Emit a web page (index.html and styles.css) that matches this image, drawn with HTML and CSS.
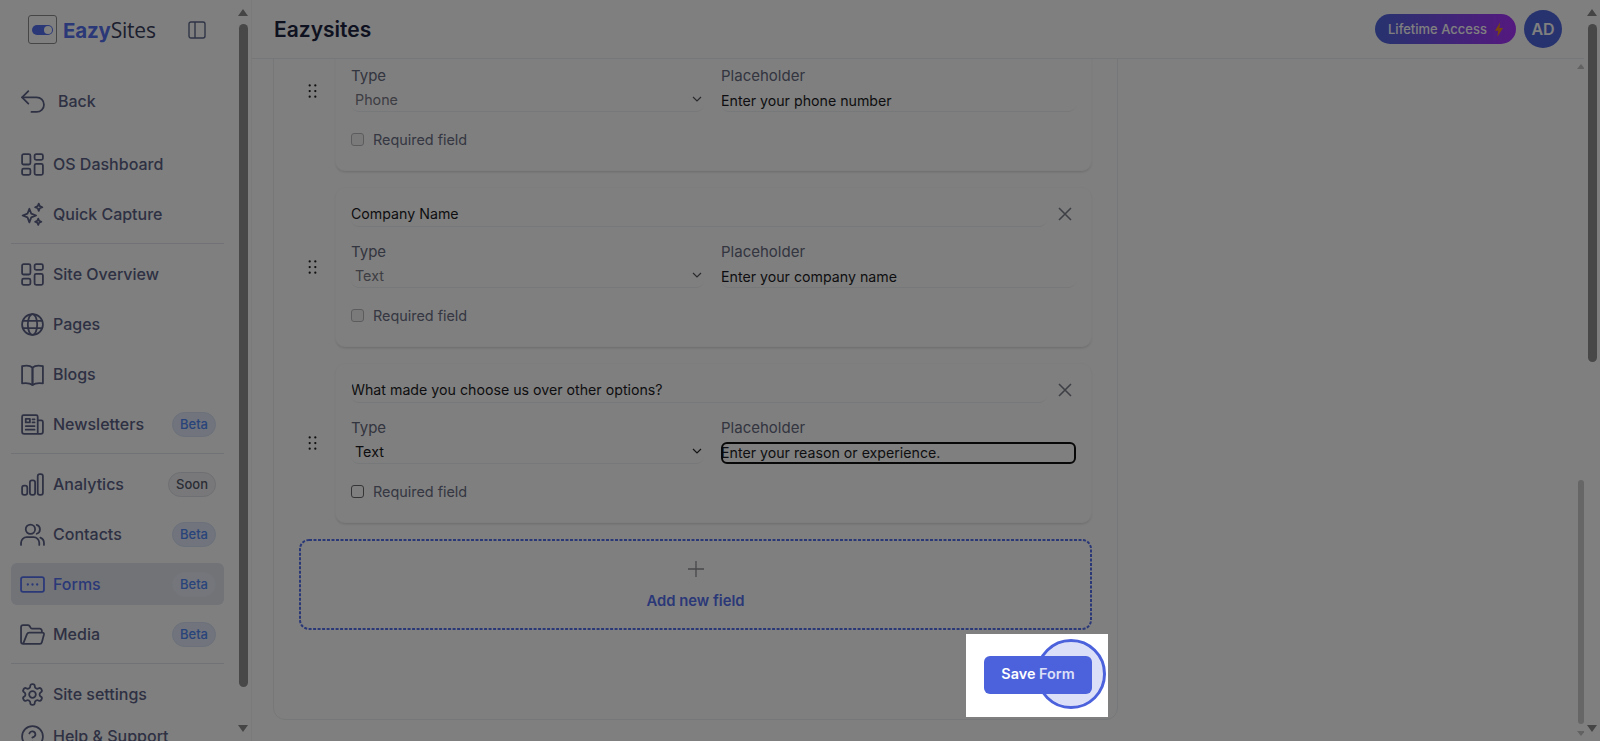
FILE: index.html
```html
<!DOCTYPE html>
<html lang="en">
<head>
<meta charset="utf-8">
<title>Eazysites</title>
<link rel="stylesheet" href="styles.css">
</head>
<body>
<div class="app">
  <aside class="sidebar">
    <div class="brand">
      <div class="logo-box"><span class="logo-toggle"><span class="logo-knob"></span></span></div>
      <div class="logo-text"><b>Eazy</b>Sites</div>
      <svg class="panel-icon" viewBox="0 0 18 18"><rect x="1" y="1" width="16" height="16" rx="2"/><path d="M7 1v16"/></svg>
    </div>
    <a class="nav-item back"><svg class="ico" viewBox="0 0 24 24"><path d="M8 14 2 8l6-6"/><path d="M2 8h14a6 6 0 0 1 0 14h-5"/></svg><span>Back</span></a>
    <nav class="nav">
      <a class="nav-item"><svg class="ico" viewBox="0 0 24 24"><rect x="2" y="2" width="8" height="10" rx="1.500"/><rect x="14" y="2" width="8" height="5.500" rx="1.500"/><rect x="14" y="11.500" width="8" height="10.500" rx="1.500"/><rect x="2" y="16" width="8" height="6" rx="1.500"/></svg><span>OS Dashboard</span></a>
      <a class="nav-item"><svg class="ico" viewBox="0 0 24 24"><path d="M9 6.500l1.800 4.700L15.500 13l-4.700 1.800L9 19.500l-1.800-4.700L2.500 13l4.700-1.800z"/><path d="M18 1.500l1 2.500 2.500 1-2.500 1-1 2.500-1-2.500-2.500-1 2.500-1z"/><path d="M17.500 16l.9 2.100 2.100.9-2.100.9-.9 2.100-.9-2.100-2.100-.9 2.100-.9z"/></svg><span>Quick Capture</span></a>
      <hr class="rule">
      <a class="nav-item"><svg class="ico" viewBox="0 0 24 24"><rect x="2" y="2" width="8" height="10" rx="1.500"/><rect x="14" y="2" width="8" height="5.500" rx="1.500"/><rect x="14" y="11.500" width="8" height="10.500" rx="1.500"/><rect x="2" y="16" width="8" height="6" rx="1.500"/></svg><span>Site Overview</span></a>
      <a class="nav-item"><svg class="ico" viewBox="0 0 24 24"><circle cx="12" cy="12" r="10"/><ellipse cx="12" cy="12" rx="4.500" ry="10"/><path d="M2.800 8.500h18.400M2.800 15.500h18.400"/></svg><span>Pages</span></a>
      <a class="nav-item"><svg class="ico" viewBox="0 0 24 24"><path d="M2 4c4-1 8-.5 10 1.500V22c-2-1.500-6-2-10-1.500z"/><path d="M22 4c-4-1-8-.5-10 1.500V22c2-1.500 6-2 10-1.500z"/></svg><span>Blogs</span></a>
      <a class="nav-item"><svg class="ico" viewBox="0 0 24 24"><path d="M17 20V4.500A1.500 1.500 0 0 0 15.500 3h-12A1.500 1.500 0 0 0 2 4.500V19a2 2 0 0 0 2 2h16a2 2 0 0 0 2-2V9.500A1.500 1.500 0 0 0 20.500 8H17"/><rect x="5.500" y="6.500" width="4" height="3.500"/><path d="M12 7h2M12 10h2M5.500 13.500H14M5.500 17H14"/></svg><span>Newsletters</span><em class="badge">Beta</em></a>
      <hr class="rule">
      <a class="nav-item"><svg class="ico" viewBox="0 0 24 24"><rect x="2" y="13" width="5" height="9" rx="2"/><rect x="9.500" y="8" width="5" height="14" rx="2"/><rect x="17" y="2" width="5" height="20" rx="2"/></svg><span>Analytics</span><em class="badge soon">Soon</em></a>
      <a class="nav-item"><svg class="ico" viewBox="0 0 24 24"><circle cx="10" cy="7" r="4.500"/><path d="M1 22v-2a5.500 5.500 0 0 1 5.500-5.500h6.500a5.500 5.500 0 0 1 5.500 5.500v2"/><path d="M16 2.700a4.500 4.500 0 0 1 0 8.600"/><path d="M23 22v-2a5.500 5.500 0 0 0-3.500-5"/></svg><span>Contacts</span><em class="badge">Beta</em></a>
      <a class="nav-item active"><svg class="ico" viewBox="0 0 24 24"><rect x="1" y="5" width="22" height="14" rx="2"/><path class="dots" d="M7.500 12h.01M12 12h.01M16.500 12h.01"/></svg><span>Forms</span><em class="badge plain">Beta</em></a>
      <a class="nav-item"><svg class="ico" viewBox="0 0 24 24"><path d="M4 21h15a2 2 0 0 0 2-1.500l2-7.500a1.500 1.500 0 0 0-1.500-1.800H9a2.500 2.500 0 0 0-2.300 1.500L3 21a2 2 0 0 1-2-2V5a2 2 0 0 1 2-2h4.500a2 2 0 0 1 1.700.9l1 1.600a2 2 0 0 0 1.700.9H19a2 2 0 0 1 2 2v1.500"/></svg><span>Media</span><em class="badge">Beta</em></a>
      <hr class="rule">
      <a class="nav-item"><svg class="ico" viewBox="0 0 24 24"><path d="M12.200 2h-.4a2 2 0 0 0-2 2v.2a2 2 0 0 1-1 1.700l-.4.300a2 2 0 0 1-2 0l-.2-.1a2 2 0 0 0-2.700.7l-.2.400a2 2 0 0 0 .7 2.700l.2.100a2 2 0 0 1 1 1.700v.5a2 2 0 0 1-1 1.700l-.2.100a2 2 0 0 0-.7 2.700l.2.400a2 2 0 0 0 2.700.7l.2-.1a2 2 0 0 1 2 0l.4.300a2 2 0 0 1 1 1.700v.2a2 2 0 0 0 2 2h.4a2 2 0 0 0 2-2v-.2a2 2 0 0 1 1-1.700l.4-.3a2 2 0 0 1 2 0l.2.100a2 2 0 0 0 2.700-.7l.2-.4a2 2 0 0 0-.7-2.700l-.2-.1a2 2 0 0 1-1-1.700v-.5a2 2 0 0 1 1-1.700l.2-.1a2 2 0 0 0 .7-2.700l-.2-.4a2 2 0 0 0-2.700-.7l-.2.100a2 2 0 0 1-2 0l-.4-.3a2 2 0 0 1-1-1.700V4a2 2 0 0 0-2-2z"/><circle cx="12" cy="12" r="3.200"/></svg><span>Site settings</span></a>
      <a class="nav-item help"><svg class="ico" viewBox="0 0 24 24"><circle cx="12" cy="12" r="10"/><path d="M9 9a3 3 0 0 1 5.800 1c0 2-3 3-3 3"/><path d="M12 17h.01"/></svg><span>Help &amp; Support</span></a>
    </nav>
  </aside>

  <main class="main">
    <header class="topbar">
      <h1 class="title">Eazysites</h1>
      <div class="top-actions">
        <a class="lifetime">Lifetime Access <svg class="bolt" viewBox="0 0 10 18"><path d="M6.500 0 0 10.500h4L3 18l7-11H5.500z"/></svg></a>
        <div class="avatar">AD</div>
      </div>
    </header>
    <div class="scroller">
      <section class="panel">
        <div class="field-row">
          <div class="handle"><svg viewBox="0 0 8 12"><path d="M1.500 1h.01M6.500 1h.01M1.500 6h.01M6.500 6h.01M1.500 11h.01M6.500 11h.01"/></svg></div>
          <div class="field-card">
            <div class="name-row"><input class="name-input" value="Phone Number"><svg class="close" viewBox="0 0 14 14"><path d="M1 1l12 12M13 1 1 13"/></svg></div>
            <div class="cols">
              <div><div class="label">Type</div><div class="select muted"><span>Phone</span><svg viewBox="0 0 10 6"><path d="M1 1l4 4 4-4"/></svg></div></div>
              <div><div class="label">Placeholder</div><input class="text-input" value="Enter your phone number"></div>
            </div>
            <label class="req muted"><input type="checkbox" disabled>Required field</label>
          </div>
        </div>
        <div class="field-row">
          <div class="handle"><svg viewBox="0 0 8 12"><path d="M1.500 1h.01M6.500 1h.01M1.500 6h.01M6.500 6h.01M1.500 11h.01M6.500 11h.01"/></svg></div>
          <div class="field-card">
            <div class="name-row"><input class="name-input" value="Company Name"><svg class="close" viewBox="0 0 14 14"><path d="M1 1l12 12M13 1 1 13"/></svg></div>
            <div class="cols">
              <div><div class="label">Type</div><div class="select muted"><span>Text</span><svg viewBox="0 0 10 6"><path d="M1 1l4 4 4-4"/></svg></div></div>
              <div><div class="label">Placeholder</div><input class="text-input" value="Enter your company name"></div>
            </div>
            <label class="req muted"><input type="checkbox" disabled>Required field</label>
          </div>
        </div>
        <div class="field-row">
          <div class="handle"><svg viewBox="0 0 8 12"><path d="M1.500 1h.01M6.500 1h.01M1.500 6h.01M6.500 6h.01M1.500 11h.01M6.500 11h.01"/></svg></div>
          <div class="field-card">
            <div class="name-row"><input class="name-input" value="What made you choose us over other options?"><svg class="close" viewBox="0 0 14 14"><path d="M1 1l12 12M13 1 1 13"/></svg></div>
            <div class="cols">
              <div><div class="label">Type</div><div class="select"><span>Text</span><svg viewBox="0 0 10 6"><path d="M1 1l4 4 4-4"/></svg></div></div>
              <div><div class="label">Placeholder</div><input class="text-input focused" value="Enter your reason or experience."></div>
            </div>
            <label class="req"><input type="checkbox">Required field</label>
          </div>
        </div>
        <a class="add-field">
          <svg class="dash" aria-hidden="true"><rect class="dash-rect" rx="9" ry="9"/></svg>
          <svg class="plus" viewBox="0 0 18 18"><path d="M9 1v16M1 9h16"/></svg>
          <span>Add new field</span>
        </a>
        <div class="actions"><button class="save">Save Form</button></div>
      </section>
      <div class="sb-thumb inner"></div>
      <i class="arrow up small"></i>
      <i class="arrow down small"></i>
    </div>
  </main>
</div>

<div class="sb-thumb side"></div>
<i class="arrow up side-up"></i>
<i class="arrow down side-down"></i>
<div class="sb-thumb page"></div>
<i class="arrow up page-up"></i>
<i class="arrow down page-down"></i>

<div class="spotlight"></div>
<div class="ring"></div>
<div class="ring-fill"></div>
</body>
</html>
```
FILE: styles.css
```css
* { box-sizing: border-box; }
html, body { margin: 0; height: 100%; overflow: hidden; }
body { font-family: Inter, "Liberation Sans", sans-serif; background: #fff; color: #232635; position: relative; width: 1600px; height: 741px; }
.app { display: flex; height: 741px; }

/* sidebar */
.sidebar { width: 252px; flex: none; height: 741px; overflow: hidden; border-right: 1px solid #f4f5f7; padding: 0 0 0 11px; }
.brand { height: 59px; display: flex; align-items: center; padding-left: 17px; }
.logo-box { width: 29px; height: 29px; border: 1px solid #8c8c8c; border-radius: 3px; display: flex; align-items: center; justify-content: center; flex: none; }
.logo-toggle { width: 21px; height: 10px; border-radius: 5px; background: #5570f0; display: flex; justify-content: flex-end; padding: 1px; }
.logo-knob { width: 8px; height: 8px; border-radius: 50%; background: #fff; }
.logo-text { margin-left: 6px; font-family: "Open Sans", sans-serif; font-size: 21px; color: #39405c; width: 125px; flex: none; letter-spacing: -0.2px; }
.logo-text b { color: #5570f0; font-weight: 700; font-family: Inter, sans-serif; font-size: 20.500px; }
.panel-icon { width: 18px; height: 18px; flex: none; fill: none; stroke: #5f6a8e; stroke-width: 1.400; }
.nav { display: flex; flex-direction: column; gap: 8px; width: 213px; margin-top: 21px; }
.nav-item { height: 42px; flex: none; display: flex; align-items: center; gap: 8px; padding: 0 8px 0 9px; border-radius: 6px; font-size: 16px; font-weight: 500; color: #5c6286; }
.nav-item > span { flex: 1; white-space: nowrap; }
.nav-item.back { margin-top: 21px; width: 213px; gap: 13px; }
.nav-item.help { margin-top: -8px; }
.ico { width: 25px; height: 25px; flex: none; fill: none; stroke: currentColor; stroke-width: 1.700; stroke-linecap: round; stroke-linejoin: round; }
.ico .dots { stroke-width: 2.200; }
.nav-item.active { background: #e3e7ef; color: #5570f0; }
.rule { height: 2px; margin: 0; border: 0; border-top: 1px solid #e3e5ea; flex: none; }
.badge { font-style: normal; font-size: 13px; font-weight: 500; color: #5288f5; height: 25px; padding: 0 7px; display: flex; align-items: center; background: #e2e9f8; border: 1px solid #d6e1f5; border-radius: 13px; margin-left: auto; }
.badge.soon { background: #f0f1f4; border-color: #dddfe5; color: #555a6b; }
.badge.plain { background: #e8edf8; border-color: #e6ebf5; }

/* main */
.main { flex: 1; min-width: 0; display: flex; flex-direction: column; padding-right: 16px; height: 741px; }
.topbar { height: 59px; flex: none; display: flex; align-items: center; justify-content: space-between; padding: 0 0 0 22px; border-bottom: 1px solid #eceef1; position: relative; z-index: 1; background: #fff; }
.title { margin: 0; font-size: 21px; font-weight: 600; color: #1d2440; }
.top-actions { display: flex; align-items: center; gap: 8px; margin-right: 22px; }
.lifetime { width: 141px; height: 30px; border-radius: 15px; display: flex; align-items: center; justify-content: center; gap: 8px; font-size: 13px; font-weight: 500; color: #fff; background: linear-gradient(90deg, #4e66dc, #aa32ff); white-space: nowrap; }
.bolt { width: 8px; height: 15px; fill: #f08a1d; }
.avatar { width: 38px; height: 38px; border-radius: 50%; background: #4e66dc; color: #fff; display: flex; align-items: center; justify-content: center; font-size: 16px; font-weight: 600; }
.scroller { flex: 1; min-height: 0; overflow: hidden; position: relative; padding-left: 21px; }
.panel { width: 845px; margin-top: -73px; padding: 24px 25px 25px; border: 1px solid #eceef1; border-radius: 12px; display: flex; flex-direction: column; gap: 16px; }
.field-row { display: flex; align-items: center; height: 160px; }
.handle { width: 36px; flex: none; padding-left: 9px; }
.handle svg { display: block; width: 9px; height: 14px; fill: none; stroke: #202020; stroke-width: 2; stroke-linecap: round; }
.field-card { flex: 1; min-width: 0; height: 160px; padding: 17px 15px 0; border: 1px solid #fafafb; border-radius: 10px; box-shadow: 0 2px 3px -1px rgba(0,0,0,.16); background: #fff; }
.name-row { display: flex; align-items: center; height: 22px; }
.name-input, .text-input { display: block; font: 400 14.200px Inter, sans-serif; color: #1c1c24; border: 0; border-bottom: 1px solid #eff0f3; border-radius: 8px; height: 22px; background: transparent; padding: 0; outline: 0; }
.name-input { width: 696px; padding-bottom: 4px; }
.close { width: 14px; height: 14px; margin: 0 0 4px 11px; flex: none; fill: none; stroke: #7c808c; stroke-width: 1.600; }
.cols { display: grid; grid-template-columns: 353px 355px; gap: 17px; margin-top: 16px; }
.label { font-size: 15px; line-height: 18px; color: #666a7e; margin-bottom: 5px; height: 18px; }
.select { height: 22px; display: flex; align-items: center; justify-content: space-between; padding: 0 2px 3px 4px; font-size: 14.300px; color: #1c1c24; border-bottom: 1px solid #eff0f3; border-radius: 8px; }
.select.muted { color: #7a7a86; }
.select svg { width: 10px; height: 6px; fill: none; stroke: #2a2a30; stroke-width: 1.200; }
.select.muted svg { stroke: #55555c; }
.text-input { width: 355px; }
.text-input.focused { outline: 2px solid #111; outline-offset: -2px; border: 0; border-radius: 6px; padding: 0 0 2px; }
.req { display: flex; align-items: center; gap: 9px; margin-top: 19px; font-size: 14.400px; color: #6a6e84; }
.req input { appearance: none; width: 13px; height: 13px; margin: 0; border: 1px solid #6a6a70; border-radius: 3px; background: #fff; }
.req.muted input { border-color: #b8b8be; background: #f4f4f6; }
.add-field { height: 91px; position: relative; display: flex; flex-direction: column; align-items: center; justify-content: center; gap: 14px; color: #5570f0; font-size: 14.800px; font-weight: 600; }
.dash { position: absolute; inset: 0; width: 100%; height: 100%; }
.dash-rect { x: 1px; y: 1px; width: calc(100% - 2px); height: calc(100% - 2px); fill: none; stroke: #5570f0; stroke-width: 2; stroke-dasharray: 3 1.500; }
.plus { width: 18px; height: 18px; fill: none; stroke: #8f8f96; stroke-width: 1.300; }
.actions { display: flex; justify-content: flex-end; margin-top: 10px; }
.save { width: 108px; height: 38px; border: 0; border-radius: 6px; background: #4c62dc; color: #fff; font: 600 14.400px Inter, sans-serif; padding: 0 0 3px; position: relative; z-index: 7; }

/* scrollbars */
.sb-thumb { position: absolute; background: #909090; border-radius: 5px; }
.sb-thumb.side { left: 239px; top: 24px; width: 9px; height: 663px; }
.sb-thumb.page { left: 1588px; top: 24px; width: 9px; height: 338px; }
.sb-thumb.inner { left: 1326px; top: 421px; width: 6px; height: 244px; background: #cdcdcd; }
.arrow { position: absolute; width: 0; height: 0; border-left: 5px solid transparent; border-right: 5px solid transparent; }
.arrow.up { border-bottom: 7px solid #8a8a8a; }
.arrow.down { border-top: 7px solid #8a8a8a; }
.side-up { left: 238px; top: 9px; }
.side-down { left: 238px; top: 725px; }
.page-up { left: 1587px; top: 9px; }
.page-down { left: 1587px; top: 725px; }
.arrow.small { border-left-width: 4px; border-right-width: 4px; }
.arrow.small.up { left: 1325px; top: 5px; border-bottom: 5px solid #c4c4c4; }
.arrow.small.down { left: 1325px; top: 672px; border-top: 5px solid #c4c4c4; }

/* spotlight */
.spotlight { position: absolute; z-index: 5; left: 966px; top: 634px; width: 142px; height: 83px; box-shadow: 0 0 0 2000px rgba(0,0,0,.5); }
.ring { position: absolute; z-index: 6; left: 1036px; top: 639px; width: 70px; height: 70px; border-radius: 50%; border: 3.500px solid #4c62dc; }
.ring-fill { position: absolute; z-index: 8; left: 1039px; top: 642px; width: 64px; height: 64px; border-radius: 50%; background: rgba(76,98,220,.2); }
```
